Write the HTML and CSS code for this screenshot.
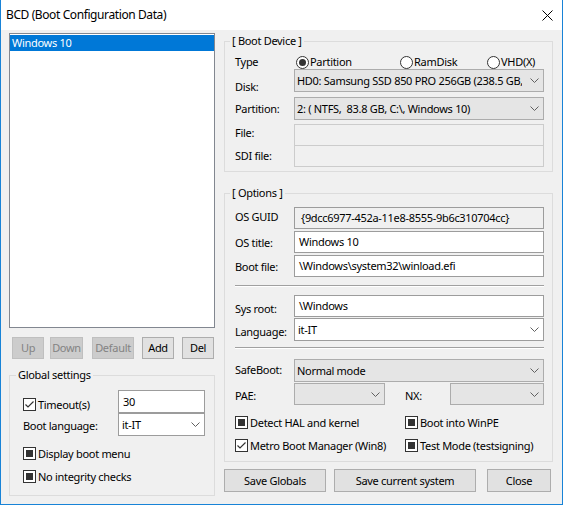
FILE: index.html
```html
<!doctype html>
<html lang="en">
  <head>
    <meta charset="UTF-8" />
    <title>BCD (Boot Configuration Data)</title>
    <link rel="stylesheet" href="styles.css">
  </head>
  <body>
    <div class="c-window">
      <header class="c-window__titlebar">
        <span class="c-window__title">BCD (Boot Configuration Data)</span>
        <svg class="c-window__close" width="11" height="11" viewBox="0 0 11 11"><path d="M0.5 0.5 10.5 10.5 M10.5 0.5 0.5 10.5" /></svg>
      </header>

      <div class="c-window__client">
        <div class="c-left">
          <div class="c-listbox">
            <div class="c-listbox__item c-listbox__item--selected">Windows 10</div>
          </div>

          <div class="c-list-actions">
            <button class="c-button c-button--disabled c-list-actions__up">Up</button>
            <button class="c-button c-button--disabled c-list-actions__down">Down</button>
            <button class="c-button c-button--disabled c-list-actions__default">Default</button>
            <button class="c-button c-list-actions__add">Add</button>
            <button class="c-button c-list-actions__del">Del</button>
          </div>

          <fieldset class="c-group c-group--global">
            <legend class="c-group__title">Global settings</legend>
            <div class="c-global">
              <div class="c-global__row c-field">
                <label class="c-check u-mt-7"><span class="c-check__box"><svg width="11" height="11" viewBox="0 0 11 11"><path d="M1.5 5.5 4 8 9.5 2.5" /></svg></span>Timeout(s)</label>
                <div class="c-edit c-global__control">30</div>
              </div>
              <div class="c-global__row c-field">
                <span class="u-mt-5">Boot language:</span>
                <div class="c-combo c-combo--editable c-global__control">
                  <span class="c-combo__value">it-IT</span>
                  <svg class="c-combo__arrow" width="9" height="5" viewBox="0 0 9 5"><path d="M0.5 0.5 4.5 4.5 8.5 0.5" /></svg>
                </div>
              </div>
              <label class="c-check u-mt-10"><span class="c-check__box c-check__box--mixed"></span>Display boot menu</label>
              <label class="c-check u-mt-8"><span class="c-check__box c-check__box--mixed"></span>No integrity checks</label>
            </div>
          </fieldset>
        </div>

        <div class="c-right">
          <fieldset class="c-group c-group--device">
            <legend class="c-group__title">[ Boot Device ]</legend>
            <div class="c-group__body c-group__body--device">
              <div class="c-field c-field--type">
                <span class="c-field__label">Type</span>
                <label class="c-radio c-radio--partition"><span class="c-radio__dot c-radio__dot--checked"></span>Partition</label>
                <label class="c-radio c-radio--ramdisk"><span class="c-radio__dot"></span>RamDisk</label>
                <label class="c-radio"><span class="c-radio__dot"></span>VHD(X)</label>
              </div>
              <div class="c-field">
                <span class="c-field__label u-mt-10">Disk:</span>
                <div class="c-combo">
                  <span class="c-combo__value">HD0: Samsung SSD 850 PRO 256GB (238.5 GB,</span>
                  <svg class="c-combo__arrow" width="9" height="5" viewBox="0 0 9 5"><path d="M0.5 0.5 4.5 4.5 8.5 0.5" /></svg>
                </div>
              </div>
              <div class="c-field u-mt-5">
                <span class="c-field__label u-mt-4">Partition:</span>
                <div class="c-combo">
                  <span class="c-combo__value">2: ( NTFS,&nbsp; 83.8 GB, C:\, Windows 10)</span>
                  <svg class="c-combo__arrow" width="9" height="5" viewBox="0 0 9 5"><path d="M0.5 0.5 4.5 4.5 8.5 0.5" /></svg>
                </div>
              </div>
              <div class="c-field c-field--short u-mt-4">
                <span class="c-field__label u-mt-1">File:</span>
                <div class="c-edit c-edit--disabled"></div>
              </div>
              <div class="c-field c-field--short c-field--joined">
                <span class="c-field__label u-mt-3">SDI file:</span>
                <div class="c-edit c-edit--disabled"></div>
              </div>
            </div>
          </fieldset>

          <fieldset class="c-group c-group--options">
            <legend class="c-group__title">[ Options ]</legend>
            <div class="c-group__body c-group__body--options">
              <div class="c-field c-field--short">
                <span class="c-field__label u-mt-2">OS GUID</span>
                <div class="c-edit c-edit--readonly">{9dcc6977-452a-11e8-8555-9b6c310704cc}</div>
              </div>
              <div class="c-field c-field--short u-mt-2">
                <span class="c-field__label u-mt-4">OS title:</span>
                <div class="c-edit">Windows 10</div>
              </div>
              <div class="c-field c-field--short u-mt-2">
                <span class="c-field__label u-mt-4">Boot file:</span>
                <div class="c-edit">\Windows\system32\winload.efi</div>
              </div>

              <div class="c-separator u-mt-8"></div>

              <div class="c-field c-field--short u-mt-8">
                <span class="c-field__label u-mt-6">Sys root:</span>
                <div class="c-edit">\Windows</div>
              </div>
              <div class="c-field u-mt-1">
                <span class="c-field__label u-mt-6">Language:</span>
                <div class="c-combo c-combo--editable">
                  <span class="c-combo__value">it-IT</span>
                  <svg class="c-combo__arrow" width="9" height="5" viewBox="0 0 9 5"><path d="M0.5 0.5 4.5 4.5 8.5 0.5" /></svg>
                </div>
              </div>

              <div class="c-separator u-mt-6"></div>

              <div class="c-field u-mt-10">
                <span class="c-field__label u-mt-3">SafeBoot:</span>
                <div class="c-combo">
                  <span class="c-combo__value">Normal mode</span>
                  <svg class="c-combo__arrow" width="9" height="5" viewBox="0 0 9 5"><path d="M0.5 0.5 4.5 4.5 8.5 0.5" /></svg>
                </div>
              </div>
              <div class="c-field c-field--short u-mt-1">
                <span class="c-field__label u-mt-5">PAE:</span>
                <div class="c-combo c-combo--pae">
                  <span class="c-combo__value"></span>
                  <svg class="c-combo__arrow" width="9" height="5" viewBox="0 0 9 5"><path d="M0.5 0.5 4.5 4.5 8.5 0.5" /></svg>
                </div>
                <span class="c-field__label c-field__label--nx u-mt-5">NX:</span>
                <div class="c-combo">
                  <span class="c-combo__value"></span>
                  <svg class="c-combo__arrow" width="9" height="5" viewBox="0 0 9 5"><path d="M0.5 0.5 4.5 4.5 8.5 0.5" /></svg>
                </div>
              </div>

              <div class="c-flags u-mt-10">
                <label class="c-check"><span class="c-check__box c-check__box--mixed"></span>Detect HAL and kernel</label>
                <label class="c-check"><span class="c-check__box c-check__box--mixed"></span>Boot into WinPE</label>
              </div>
              <div class="c-flags u-mt-8">
                <label class="c-check"><span class="c-check__box"><svg width="11" height="11" viewBox="0 0 11 11"><path d="M1.5 5.5 4 8 9.5 2.5" /></svg></span>Metro Boot Manager (Win8)</label>
                <label class="c-check"><span class="c-check__box c-check__box--mixed"></span>Test Mode (testsigning)</label>
              </div>
            </div>
          </fieldset>

          <div class="c-dialog-actions">
            <button class="c-button c-dialog-actions__globals">Save Globals</button>
            <button class="c-button c-dialog-actions__current">Save current system</button>
            <button class="c-button c-dialog-actions__close">Close</button>
          </div>
        </div>
      </div>
    </div>
  </body>
</html>
```

FILE: styles.css
```css
* {
  box-sizing: border-box;
}

html,
body {
  margin: 0;
  padding: 0;
}

body {
  font-family: 'Noto Sans', sans-serif;
  font-size: 11px;
  line-height: 16px;
  letter-spacing: -0.3px;
  color: #000;
  background: #fff;
}

button {
  margin: 0;
  padding: 0;
  font: inherit;
  letter-spacing: inherit;
  color: inherit;
}

/* window frame */

.c-window {
  width: 563px;
  height: 505px;
  display: flex;
  flex-direction: column;
  border: 1px solid #1883d7;
  border-top: 0;
  background: #f0f0f0;
}

.c-window__titlebar {
  height: 30px;
  flex: none;
  display: flex;
  align-items: center;
  justify-content: space-between;
  padding: 0 9px 0 5px;
  background: #fff;
}

.c-window__title {
  font-size: 12px;
  letter-spacing: -0.4px;
}

.c-window__close path {
  fill: none;
  stroke: #000;
  stroke-width: 1;
}

.c-window__client {
  flex: 1;
  display: flex;
  gap: 9px;
  padding: 3px 0 0 8px;
}

.c-left {
  width: 206px;
  display: flex;
  flex-direction: column;
}

.c-right {
  width: 329px;
  display: flex;
  flex-direction: column;
}

/* list of boot entries */

.c-listbox {
  height: 295px;
  padding-top: 1px;
  border: 1px solid #828790;
  background: #fff;
}

.c-listbox__item {
  height: 16px;
  padding-left: 2px;
}

.c-listbox__item--selected {
  background: #0078d7;
  color: #fff;
}

/* buttons */

.c-button {
  border: 1px solid #adadad;
  background: #e1e1e1;
}

.c-button--disabled {
  border-color: #bfbfbf;
  background: #cccccc;
  color: #838383;
}

.c-list-actions {
  display: flex;
  height: 22px;
  margin-top: 9px;
}

.c-list-actions__up {
  width: 32px;
  margin-left: 3px;
}
.c-list-actions__down {
  width: 33px;
  margin-left: 6px;
}
.c-list-actions__default {
  width: 42px;
  margin-left: 9px;
}
.c-list-actions__add {
  width: 32px;
  margin-left: 8px;
}
.c-list-actions__del {
  width: 32px;
  margin-left: 8px;
}

.c-dialog-actions {
  display: flex;
  height: 23px;
  margin-top: 7px;
}

.c-dialog-actions__globals {
  width: 102px;
}
.c-dialog-actions__current {
  width: 142px;
  margin-left: 8px;
}
.c-dialog-actions__close {
  width: 64px;
  margin-left: auto;
  margin-right: 2px;
}

/* group boxes */

.c-group {
  min-width: 0;
  margin: 0;
  padding: 0;
  border: 1px solid #dcdcdc;
}

.c-group__title {
  margin-left: 5px;
  padding: 0 2px;
  line-height: 16px;
}

.c-group--global {
  margin-top: 8px;
}

.c-group--global .c-group__title {
  margin-left: 6px;
}

.c-group--options {
  margin-top: 13px;
}

.c-group__body {
  padding: 0 8px 0 10px;
}

.c-group__body--device {
  padding-top: 6px;
  padding-bottom: 4px;
}

.c-group__body--options {
  padding-top: 6px;
  padding-bottom: 8px;
}

.c-global {
  padding: 7px 9px 11px 13px;
}

.c-global__row {
  justify-content: space-between;
}

.c-global__control {
  width: 87px;
  flex: none;
}

/* label + control rows */

.c-field {
  display: flex;
  align-items: flex-start;
  height: 23px;
}

.c-field--short {
  height: 22px;
}

.c-field--joined {
  margin-top: -1px;
}

.c-field--type {
  height: 14px;
  align-items: center;
}

.c-field__label {
  width: 59px;
  flex: none;
  white-space: nowrap;
}

.c-field__label--nx {
  width: 45px;
  margin-left: 20px;
}

.c-field > .c-edit,
.c-field > .c-combo {
  flex: 1;
  min-width: 0;
  height: 100%;
}

.c-field > .c-combo--pae {
  flex: none;
  width: 91px;
}

.c-global__row > .c-global__control {
  flex: none;
}

.c-edit {
  display: flex;
  align-items: center;
  height: 23px;
  padding: 0 4px;
  border: 1px solid #9c9c9c;
  background: #fff;
  white-space: nowrap;
  overflow: hidden;
}

.c-edit--readonly {
  background: #f0f0f0;
  padding-left: 6px;
}

.c-edit--disabled {
  border-color: #cccccc;
  background: #f0f0f0;
}

.c-combo {
  display: flex;
  align-items: center;
  height: 23px;
  padding: 0 4px 0 2px;
  border: 1px solid #acacac;
  background: #e5e5e5;
}

.c-combo--editable {
  padding-left: 3px;
  border-color: #9c9c9c;
  background: #fff;
}

/* text is cut before the drop-down button */
.c-combo__value {
  flex: 1;
  min-width: 0;
  margin-right: 8px;
  white-space: nowrap;
  overflow: hidden;
}

.c-combo__arrow {
  flex: none;
}

.c-combo__arrow path {
  fill: none;
  stroke: #606060;
  stroke-width: 1;
}

.c-separator {
  height: 2px;
  border-top: 1px solid #a0a0a0;
  border-bottom: 1px solid #fff;
}

/* check boxes and radio buttons */

.c-check {
  display: flex;
  align-items: center;
  gap: 2px;
  height: 15px;
  white-space: nowrap;
}

.c-check__box {
  width: 13px;
  height: 13px;
  flex: none;
  display: flex;
  align-items: center;
  justify-content: center;
  border: 1px solid #333;
  background: #fff;
}

.c-check__box path {
  fill: none;
  stroke: #333;
  stroke-width: 1.2;
}

.c-check__box--mixed::after {
  content: '';
  width: 7px;
  height: 7px;
  background: #333;
}

.c-flags {
  display: grid;
  grid-template-columns: 170px 1fr;
}

.c-radio {
  display: flex;
  align-items: center;
  gap: 1px;
}

.c-radio--partition {
  width: 104px;
  margin-left: 2px;
}

.c-radio--ramdisk {
  width: 87px;
}

.c-radio__dot {
  width: 13px;
  height: 13px;
  flex: none;
  display: flex;
  align-items: center;
  justify-content: center;
  border: 1px solid #333;
  border-radius: 50%;
  background: #fff;
}

.c-radio__dot--checked::after {
  content: '';
  width: 7px;
  height: 7px;
  border-radius: 50%;
  background: #333;
}

/* small offsets */

.u-mt-1 {
  margin-top: 1px;
}
.u-mt-2 {
  margin-top: 2px;
}
.u-mt-3 {
  margin-top: 3px;
}
.u-mt-4 {
  margin-top: 4px;
}
.u-mt-5 {
  margin-top: 5px;
}
.u-mt-6 {
  margin-top: 6px;
}
.u-mt-7 {
  margin-top: 7px;
}
.u-mt-8 {
  margin-top: 8px;
}
.u-mt-10 {
  margin-top: 10px;
}
```
